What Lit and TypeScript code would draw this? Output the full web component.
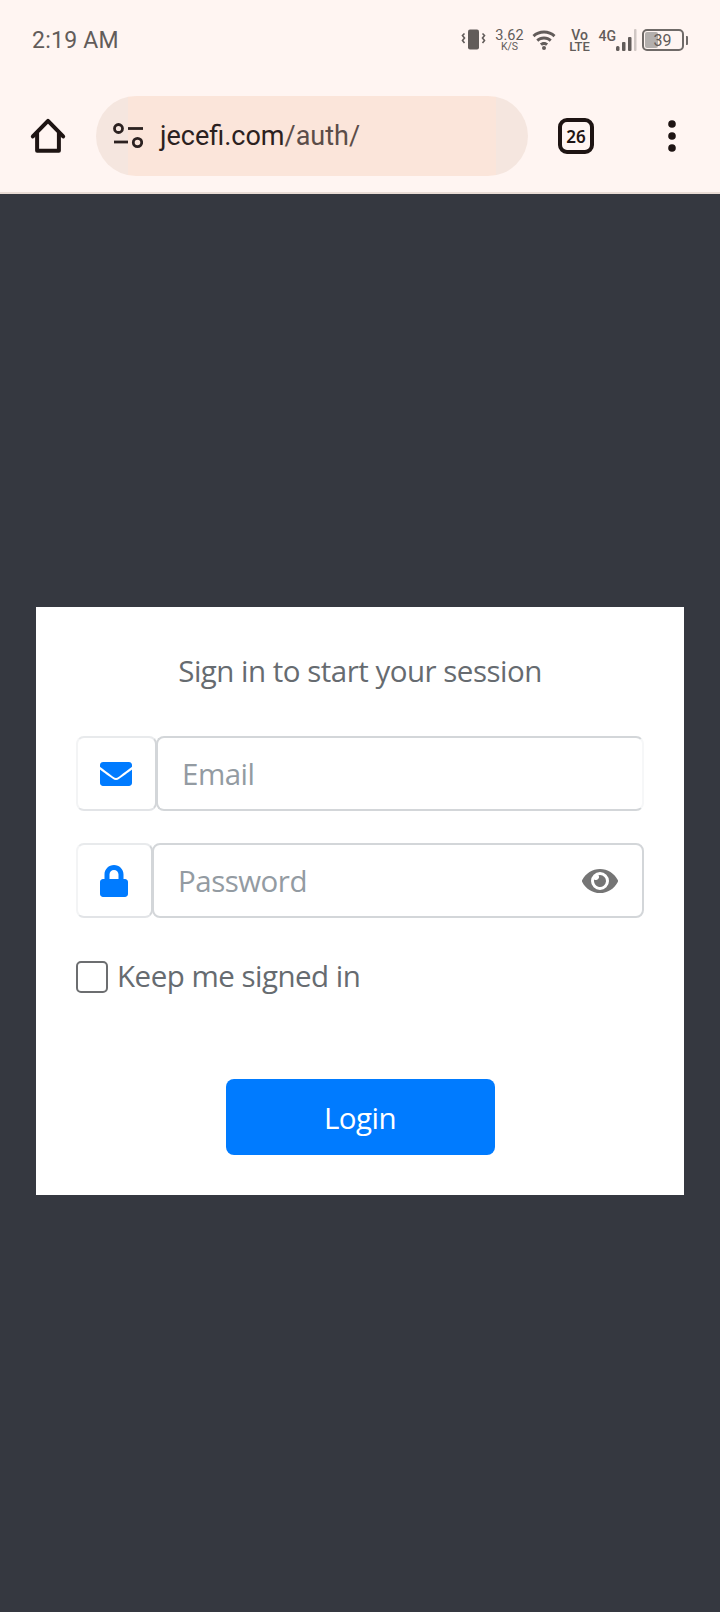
import { LitElement, html, css } from "lit";
import { customElement } from "lit/decorators.js";

@customElement("app-root")
export class AppRoot extends LitElement {
  static styles = css`
    :host { display: block; width: 720px; height: 1612px; background: #353840; overflow: hidden; }
    * { box-sizing: border-box; }
    .chrome { height: 194px; background: #fff5f2; border-bottom: 2px solid #e9dcd5; font-family: Roboto, sans-serif; }
    .status { height: 80px; display: flex; align-items: center; padding-left: 32px; }
    .time { font-size: 23px; color: #625c5a; flex: 1; letter-spacing: 0.25px; }
    .sys { display: flex; align-items: center; color: #625c5a; padding-right: 36px; height: 24px; }
    .sys svg { display: block; flex: none; }
    .stack { display: flex; flex-direction: column; align-items: center; line-height: 1; font-weight: 500; }
    .speed { width: 28px; margin: 0 8px 0 10px; }
    .speed b { font-size: 14.5px; font-weight: 400; line-height: 13px; }
    .speed i { font-size: 10.5px; font-style: normal; font-weight: 400; line-height: 10px; }
    .volte { width: 22px; margin: 0 8px 0 13px; }
    .volte b { font-size: 14px; font-weight: 500; line-height: 12px; }
    .volte i { font-size: 13px; font-style: normal; font-weight: 500; line-height: 11px; }
    .g4 { font-size: 14px; font-weight: 500; width: 17px; margin-bottom: 8px; }
    .batt { position: relative; width: 42px; height: 22px; margin-left: 5px; border: 2px solid #6f6a68; border-radius: 5px; display: flex; align-items: center; justify-content: center; font-size: 16px; overflow: hidden; }
    .batt::before { content: ""; position: absolute; left: 1px; top: 1px; bottom: 1px; width: 13px; background: #b3afad; border-radius: 2px; }
    .batt span { position: relative; }
    .nub { width: 2.5px; height: 9px; background: #6f6a68; margin-left: 2px; margin-right: -4px; border-radius: 0 1px 1px 0; }
    .toolbar { height: 80px; margin-top: 16px; display: flex; align-items: center; padding-left: 30px; }
    .toolbar svg { display: block; flex: none; }
    .pill { width: 432px; height: 80px; margin-left: 30px; border-radius: 40px; background: linear-gradient(90deg, #f5e6df 0 32px, #fbe5da 32px 400px, #f5e6df 400px); display: flex; align-items: center; padding-left: 17px; color: #2b2120; font-size: 27px; }
    .url { margin-left: 17px; }
    .url span { color: #5b4d49; }
    .tabs { width: 36px; height: 36px; margin-left: 30px; border: 4px solid #1e1413; border-radius: 9px; display: flex; align-items: center; justify-content: center; font-size: 17px; font-weight: 600; color: #1e1413; font-family: "Noto Sans", sans-serif; }
    .more { margin-left: 74px; }
    main { padding: 413px 36px 0; }
    .card { background: #fff; padding: 40px; font-family: "Open Sans", sans-serif; color: #666b70; }
    .title { margin: 0 0 39px; padding-bottom: 3px; height: 50px; font-size: 29.5px; line-height: 47px; font-weight: 400; text-align: center; letter-spacing: -0.5px; }
    .group { display: flex; height: 75px; margin-bottom: 32px; }
    .addon { flex: none; display: flex; align-items: center; justify-content: center; border: 2px solid #f3f4f5; border-top-color: #e8eaec; border-bottom-color: #e2e4e7; border-right-color: #d3d6d9; border-radius: 8px; }
    .addon svg { display: block; }
    .a1 { width: 81px; padding-right: 2px; }
    .a2 { width: 77px; padding-right: 1px; }
    .field { flex: 1; min-width: 0; margin-left: -1px; display: flex; align-items: center; border: 2px solid #d3d6d9; border-radius: 8px; padding-right: 24px; }
    .f1 { border-right-color: #f6f7f8; }
    input { flex: 1; min-width: 0; height: 100%; border: 0; outline: 0; padding: 0 0 1px 24px; background: none; font: 400 29.5px "Open Sans", sans-serif; letter-spacing: -0.5px; color: #666b70; }
    input::placeholder { color: #939ba2; opacity: 1; }
    .check { display: flex; align-items: center; gap: 9px; margin-top: 43px; height: 32px; font-size: 29.5px; letter-spacing: -0.5px; }
    .check span { position: relative; top: -2px; }
    .box { width: 32px; height: 32px; border: 2px solid #6c6e70; border-radius: 5px; }
    .actions { margin-top: 86px; display: flex; justify-content: center; }
    .login { width: 269px; height: 76px; border: 0; padding: 0; border-radius: 8px; background: #007bff; color: #fff; font: 400 29.5px "Open Sans", sans-serif; letter-spacing: -0.5px; }
  `;

  render() {
    return html`
      <div class="chrome">
        <div class="status">
          <div class="time">2:19 AM</div>
          <div class="sys">
            <svg width="25" height="22" viewBox="0 0 25 22" fill="none" stroke="currentColor" stroke-width="1.6">
              <rect x="7" y="0.5" width="11" height="20" rx="2" fill="currentColor" stroke="none"/>
              <path d="M3.500 4.500l-2 2 2 2.500-2 2.500 2 2.500" /><path d="M21.500 4.500l2 2-2 2.500 2 2.500-2 2.500"/>
            </svg>
            <div class="stack speed"><b>3.62</b><i>K/S</i></div>
            <svg width="24" height="20" viewBox="0 0 24 20" fill="currentColor">
              <path d="M12 0.5C7.500 0.5 3.500 2.200 0.500 5l2 2.200C5 4.900 8.300 3.600 12 3.600s7 1.300 9.500 3.600l2-2.200C20.500 2.200 16.500 .5 12 .5z"/>
              <path d="M12 6.500c-3 0-5.700 1.100-7.700 3l2 2.200c1.500-1.400 3.500-2.200 5.700-2.200s4.200.8 5.700 2.200l2-2.200c-2-1.900-4.700-3-7.700-3z"/>
              <path d="M12 12c-1.600 0-3 .6-4.100 1.600l2 2.200c.5-.5 1.300-.8 2.100-.8s1.600.3 2.100.8l2-2.200C15 12.600 13.600 12 12 12z"/>
              <circle cx="12" cy="18" r="2"/>
            </svg>
            <div class="stack volte"><b>Vo</b><i>LTE</i></div>
            <div class="g4">4G</div>
            <svg width="21" height="22" viewBox="0 0 21 22" fill="currentColor">
              <rect x="0" y="17" width="3.500" height="5" rx="1.500"/>
              <rect x="6" y="13" width="3.500" height="9" rx="1"/>
              <rect x="12" y="8" width="3.500" height="14" rx="1"/>
              <rect x="18" y="0" width="2.500" height="22" rx="1" opacity=".3"/>
            </svg>
            <div class="batt"><span>39</span></div>
            <div class="nub"></div>
          </div>
        </div>
        <div class="toolbar">
          <svg width="36" height="36" viewBox="0 0 38 38" fill="none" stroke="#1e1413" stroke-width="4.200" stroke-linejoin="round" stroke-linecap="round">
            <path d="M3 19.500 19 3l16 16.500"/><path d="M7.500 16v18.500h23V16"/>
          </svg>
          <div class="pill">
            <svg width="30" height="26" viewBox="0 0 30 26" fill="none" stroke="#2b2120" stroke-width="2.800">
              <circle cx="5.500" cy="5.500" r="4"/><path d="M15 5.500h15"/>
              <path d="M1 19h14"/><circle cx="24.500" cy="19.500" r="4.200"/>
            </svg>
            <div class="url">jecefi.com<span>/auth/</span></div>
          </div>
          <div class="tabs">26</div>
          <svg class="more" width="8" height="32" viewBox="0 0 8 32" fill="#1e1413">
            <circle cx="4" cy="4" r="3.800"/><circle cx="4" cy="16" r="3.800"/><circle cx="4" cy="28" r="3.800"/>
          </svg>
        </div>
      </div>
      <main>
        <section class="card">
          <h1 class="title">Sign in to start your session</h1>
          <div class="group">
            <div class="addon a1">
              <svg width="32" height="32" viewBox="0 0 512 512" fill="#007bff"><path d="M502.300 190.800c3.900-3.100 9.700-.2 9.700 4.700V400c0 26.500-21.500 48-48 48H48c-26.500 0-48-21.500-48-48V195.600c0-5 5.700-7.800 9.700-4.700 22.400 17.400 52.100 39.500 154.100 113.600 21.100 15.400 56.700 47.800 92.200 47.600 35.700.3 72-32.800 92.300-47.600 102-74.100 131.600-96.300 154-113.700zM256 320c23.200.4 56.600-29.200 73.400-41.400 132.700-96.300 142.800-104.700 173.400-128.700 5.800-4.500 9.200-11.500 9.200-18.900v-19c0-26.500-21.500-48-48-48H48C21.500 64 0 85.500 0 112v19c0 7.400 3.400 14.300 9.200 18.900 30.600 23.900 40.700 32.400 173.400 128.700 16.800 12.200 50.200 41.800 73.400 41.400z"/></svg>
            </div>
            <div class="field f1"><input type="email" placeholder="Email" /></div>
          </div>
          <div class="group">
            <div class="addon a2">
              <svg width="28" height="32" viewBox="0 0 448 512" fill="#007bff"><path d="M400 224h-24v-72C376 68.200 307.800 0 224 0S72 68.200 72 152v72H48c-26.500 0-48 21.500-48 48v192c0 26.500 21.500 48 48 48h352c26.500 0 48-21.500 48-48V272c0-26.500-21.500-48-48-48zm-104 0H152v-72c0-39.700 32.300-72 72-72s72 32.300 72 72v72z"/></svg>
            </div>
            <div class="field">
              <input type="password" placeholder="Password" />
              <svg width="36" height="32" viewBox="0 0 576 512" fill="#757575"><path d="M572.520 241.400C518.290 135.590 410.930 64 288 64S57.680 135.640 3.480 241.410a32.350 32.350 0 0 0 0 29.190C57.710 376.410 165.070 448 288 448s230.320-71.640 284.520-177.410a32.350 32.350 0 0 0 0-29.190zM288 400a144 144 0 1 1 144-144 143.930 143.930 0 0 1-144 144zm0-240a95.310 95.310 0 0 0-25.310 3.790 47.850 47.850 0 0 1-66.900 66.900A95.780 95.780 0 1 0 288 160z"/></svg>
            </div>
          </div>
          <div class="check"><div class="box"></div><span>Keep me signed in</span></div>
          <div class="actions"><button class="login">Login</button></div>
        </section>
      </main>
    `;
  }
}
